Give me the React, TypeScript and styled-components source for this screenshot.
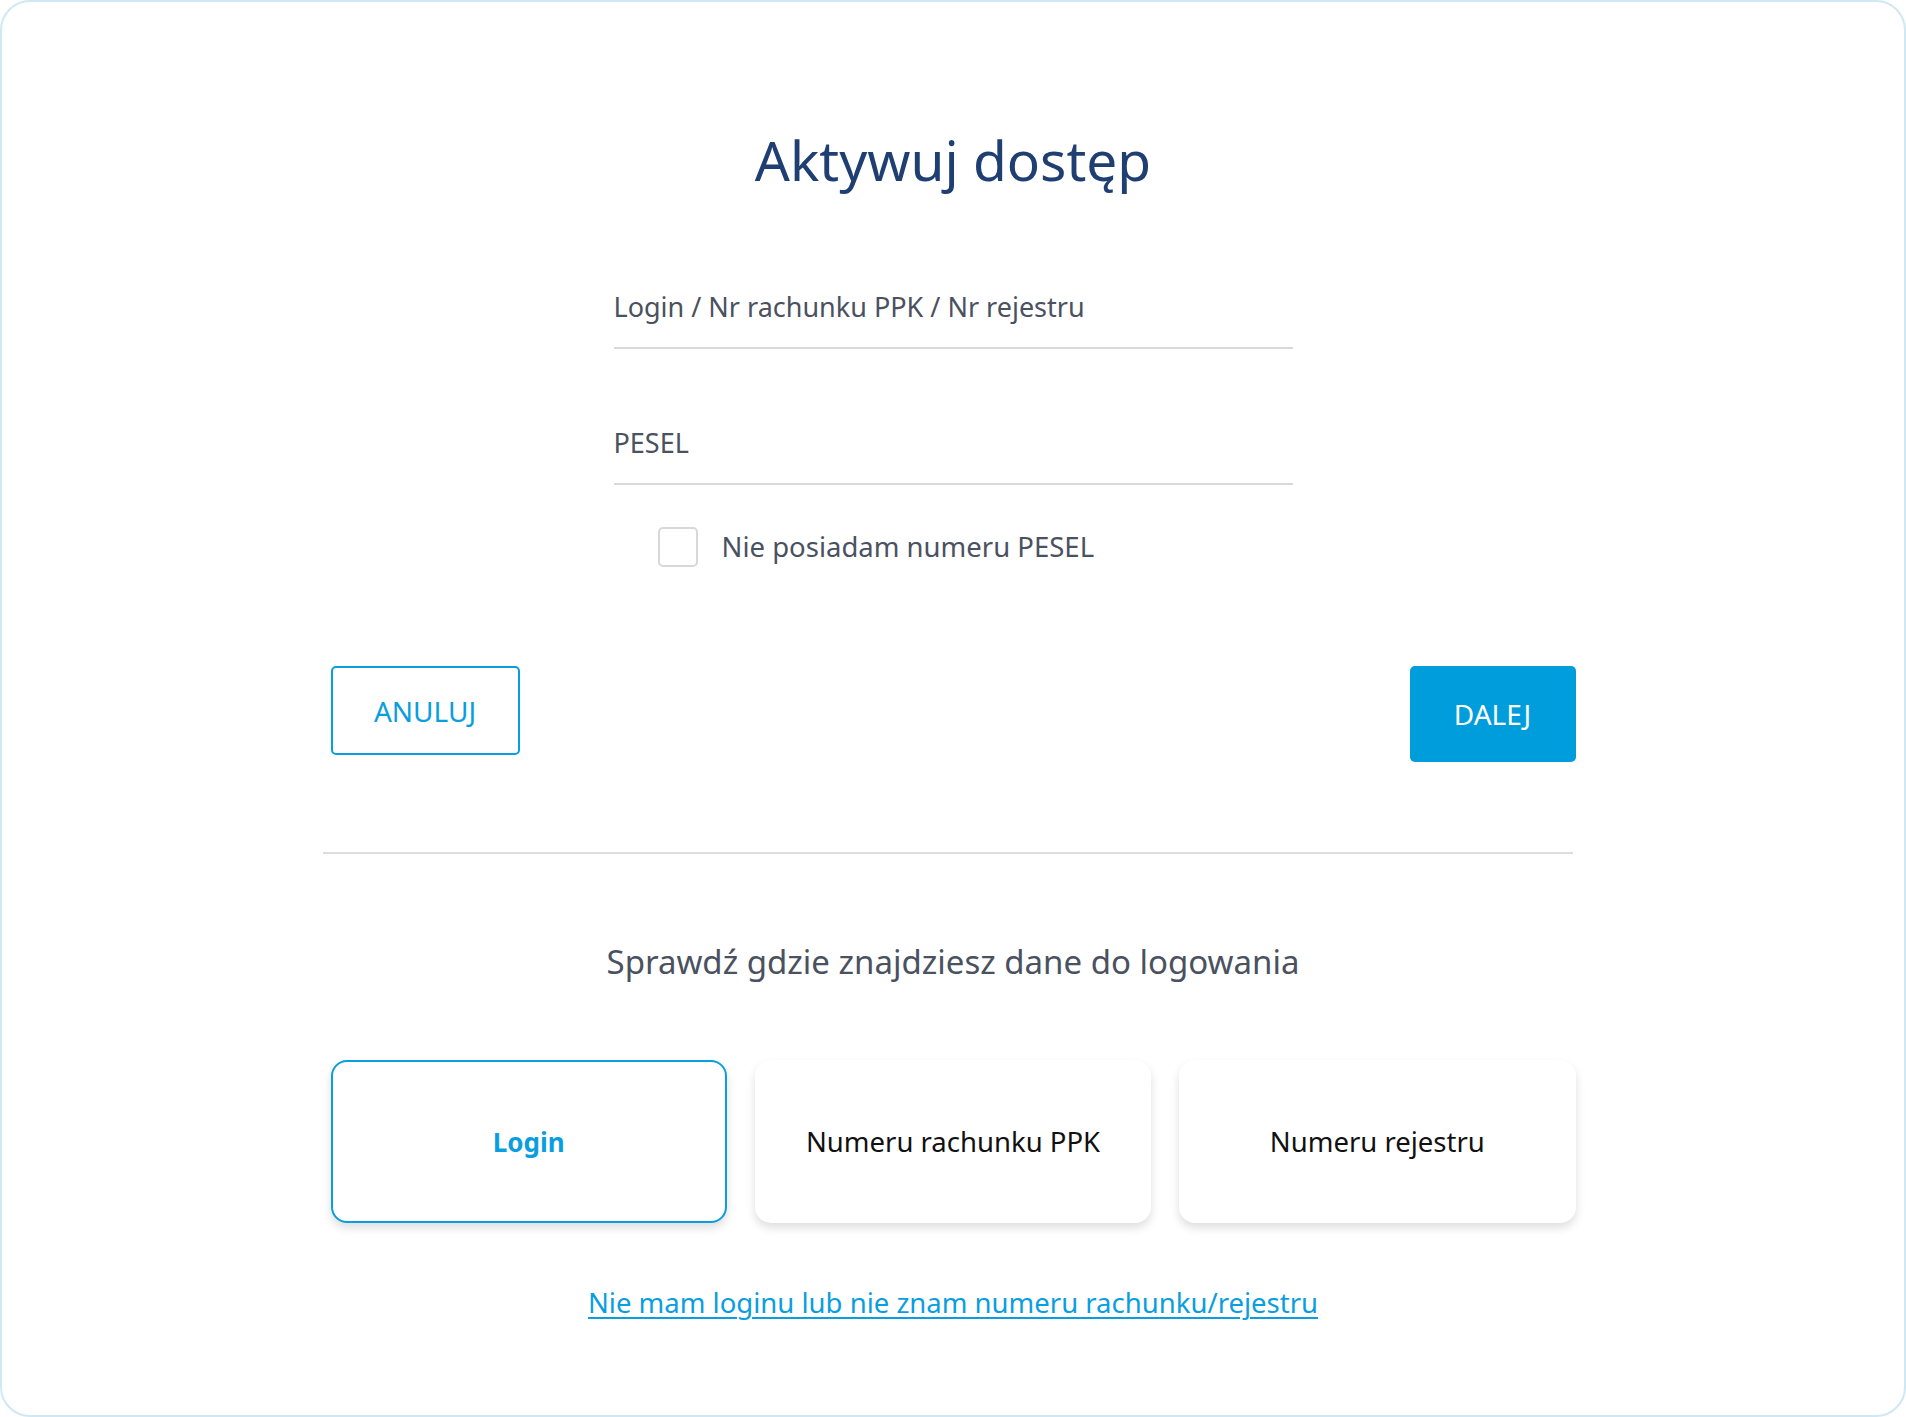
import React, { useState } from 'react';
import styled, { createGlobalStyle } from 'styled-components';

const GlobalStyle = createGlobalStyle`
  html, body {
    margin: 0;
    padding: 0;
    background: #ffffff;
  }

  body {
    font-family: "Noto Sans", "Open Sans", sans-serif;
    color: #4a5160;
  }

  * {
    box-sizing: border-box;
  }
`;

const Frame = styled.div`
  min-height: 100vh;
  border: 2px solid #cfe8f4;
  border-radius: 30px;
  background: #ffffff;
  display: flex;
  flex-direction: column;
  align-items: center;
  padding-top: 130px;
  padding-bottom: 60px;
`;

const Title = styled.h1`
  margin: 0 0 86px;
  font-size: 55px;
  line-height: 1;
  font-weight: 400;
  color: #1f3f73;
`;

const Form = styled.form`
  width: 679px;
  display: flex;
  flex-direction: column;
  gap: 60px;
`;

const TextInput = styled.input`
  width: 100%;
  box-sizing: content-box;
  height: 27px;
  padding: 20px 0 27px;
  border: none;
  border-bottom: 2px solid #d9d9d9;
  outline: none;
  background: transparent;
  font-family: inherit;
  font-size: 27px;
  line-height: 27px;
  color: #2b2f38;

  &::placeholder {
    color: #4a5160;
    opacity: 1;
  }
`;

const CheckRow = styled.label`
  display: flex;
  align-items: center;
  gap: 24px;
  margin-top: -18px;
  padding-left: 44px;
  font-size: 27.5px;
  line-height: 1;
  color: #4a5160;
  cursor: pointer;
`;

const CheckBox = styled.input`
  appearance: none;
  margin: 0;
  width: 40px;
  height: 40px;
  border: 2px solid #d8d8d8;
  border-radius: 5px;
  background: #ffffff;
  cursor: pointer;

  &:checked {
    background: #009ddd;
    border-color: #009ddd;
  }
`;

const Section = styled.div`
  width: 1245px;
`;

const Actions = styled(Section)`
  margin-top: 99px;
  display: flex;
  justify-content: space-between;
  align-items: flex-start;
`;

const Button = styled.button<{ $primary?: boolean }>`
  height: ${p => (p.$primary ? '96px' : '89px')};
  width: ${p => (p.$primary ? '166px' : '189px')};
  border-radius: 5px;
  border: ${p => (p.$primary ? 'none' : '2px solid #0a9ee0')};
  background: ${p => (p.$primary ? '#009ddd' : '#ffffff')};
  color: ${p => (p.$primary ? '#ffffff' : '#0a9ee0')};
  font-family: inherit;
  font-size: 28px;
  text-transform: uppercase;
  cursor: pointer;
`;

const Divider = styled.hr`
  width: 1250px;
  margin: 90px 10px 0 0;
  border: none;
  height: 2px;
  background: #dddddd;
`;

const Subtitle = styled.h2`
  margin: 91px 0 0;
  font-size: 33px;
  line-height: 1;
  font-weight: 400;
  color: #4a5160;
`;

const Options = styled(Section)`
  margin-top: 82px;
  display: grid;
  grid-template-columns: repeat(3, 1fr);
  gap: 28px;
`;

const Option = styled.button<{ $active?: boolean }>`
  height: 163px;
  border-radius: 16px;
  border: 2px solid ${p => (p.$active ? '#0a9ee0' : 'transparent')};
  background: #ffffff;
  box-shadow: 0 5px 10px rgba(0, 0, 0, 0.13);
  font-family: inherit;
  font-size: ${p => (p.$active ? '26px' : '27.5px')};
  font-weight: ${p => (p.$active ? 700 : 400)};
  color: ${p => (p.$active ? '#0a9ee0' : '#111111')};
  cursor: pointer;
`;

const HelpLink = styled.a`
  margin-top: 66px;
  font-size: 27.5px;
  line-height: 1;
  color: #0a9ee0;
  text-decoration: underline;
  text-underline-offset: 4px;
  text-decoration-thickness: 2px;
`;

const options = ['Login', 'Numeru rachunku PPK', 'Numeru rejestru'];

const App: React.FC = () => {
  const [active, setActive] = useState(0);
  const [noPesel, setNoPesel] = useState(false);

  return (
    <>
      <GlobalStyle />
      <Frame>
        <Title>Aktywuj dostęp</Title>

        <Form onSubmit={e => e.preventDefault()}>
          <TextInput placeholder="Login / Nr rachunku PPK / Nr rejestru" />
          <TextInput placeholder="PESEL" />
          <CheckRow>
            <CheckBox
              type="checkbox"
              checked={noPesel}
              onChange={e => setNoPesel(e.target.checked)}
            />
            Nie posiadam numeru PESEL
          </CheckRow>
        </Form>

        <Actions>
          <Button type="button">Anuluj</Button>
          <Button type="button" $primary>Dalej</Button>
        </Actions>

        <Divider />

        <Subtitle>Sprawdź gdzie znajdziesz dane do logowania</Subtitle>

        <Options>
          {options.map((label, i) => (
            <Option key={label} $active={active === i} onClick={() => setActive(i)}>
              {label}
            </Option>
          ))}
        </Options>

        <HelpLink href="#">Nie mam loginu lub nie znam numeru rachunku/rejestru</HelpLink>
      </Frame>
    </>
  );
};

export default App;
